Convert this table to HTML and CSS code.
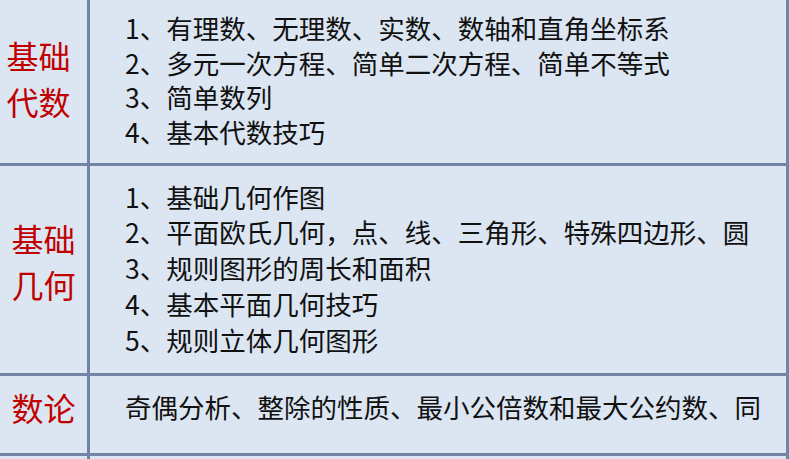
FILE: index.html
```html
<!DOCTYPE html>
<html lang="zh-CN">
<head>
<meta charset="utf-8">
<link rel="stylesheet" href="styles.css">
</head>
<body>
<div class="table">
  <div class="label label-r1"><span>基础</span><span>代数</span></div>
  <div class="items items-r1">
    <div>1、有理数、无理数、实数、数轴和直角坐标系</div>
    <div>2、多元一次方程、简单二次方程、简单不等式</div>
    <div>3、简单数列</div>
    <div>4、基本代数技巧</div>
  </div>

  <div class="label label-r2"><span>基础</span><span>几何</span></div>
  <div class="items items-r2">
    <div>1、基础几何作图</div>
    <div>2、平面欧氏几何，点、线、三角形、特殊四边形、圆</div>
    <div>3、规则图形的周长和面积</div>
    <div>4、基本平面几何技巧</div>
    <div>5、规则立体几何图形</div>
  </div>

  <div class="label label-r3"><span>数论</span></div>
  <div class="items items-r3">
    <div>奇偶分析、整除的性质、最小公倍数和最大公约数、同</div>
  </div>

  <div class="label"></div>
  <div class="items"></div>
</div>
</body>
</html>
```

FILE: styles.css
```css
html, body {
  margin: 0;
  padding: 0;
  background: #dce6f2;
  overflow: hidden;
}

.table {
  width: 789px;
  height: 459px;
  box-sizing: border-box;
  display: grid;
  grid-template-columns: 87px 1fr;
  grid-template-rows: 163px 207px 77px 1fr;
  column-gap: 3px;
  row-gap: 3px;
  padding-right: 3px;
  background: #7284a4;
  font-family: "Noto Sans CJK SC", "Noto Sans", sans-serif;
}

.label,
.items {
  background: #dce6f2;
  overflow: hidden;
}

.label {
  display: flex;
  flex-direction: column;
  align-items: center;
  justify-content: center;
  color: #c00000;
  font-size: 32px;
  line-height: 46px;
}

.label-r1 {
  padding-right: 10px;
  padding-bottom: 8px;
}

.label-r2 {
  padding-bottom: 18px;
}

.label-r3 {
  justify-content: flex-start;
  padding-top: 8px;
}

.items {
  color: #111111;
  font-size: 26.5px;
  padding-left: 35px;
  white-space: nowrap;
}

.items-r1 {
  line-height: 34.7px;
  padding-top: 11px;
}

.items-r2 {
  line-height: 35.8px;
  padding-top: 12.5px;
}

.items-r3 {
  line-height: 36px;
  padding-top: 13px;
}
```
